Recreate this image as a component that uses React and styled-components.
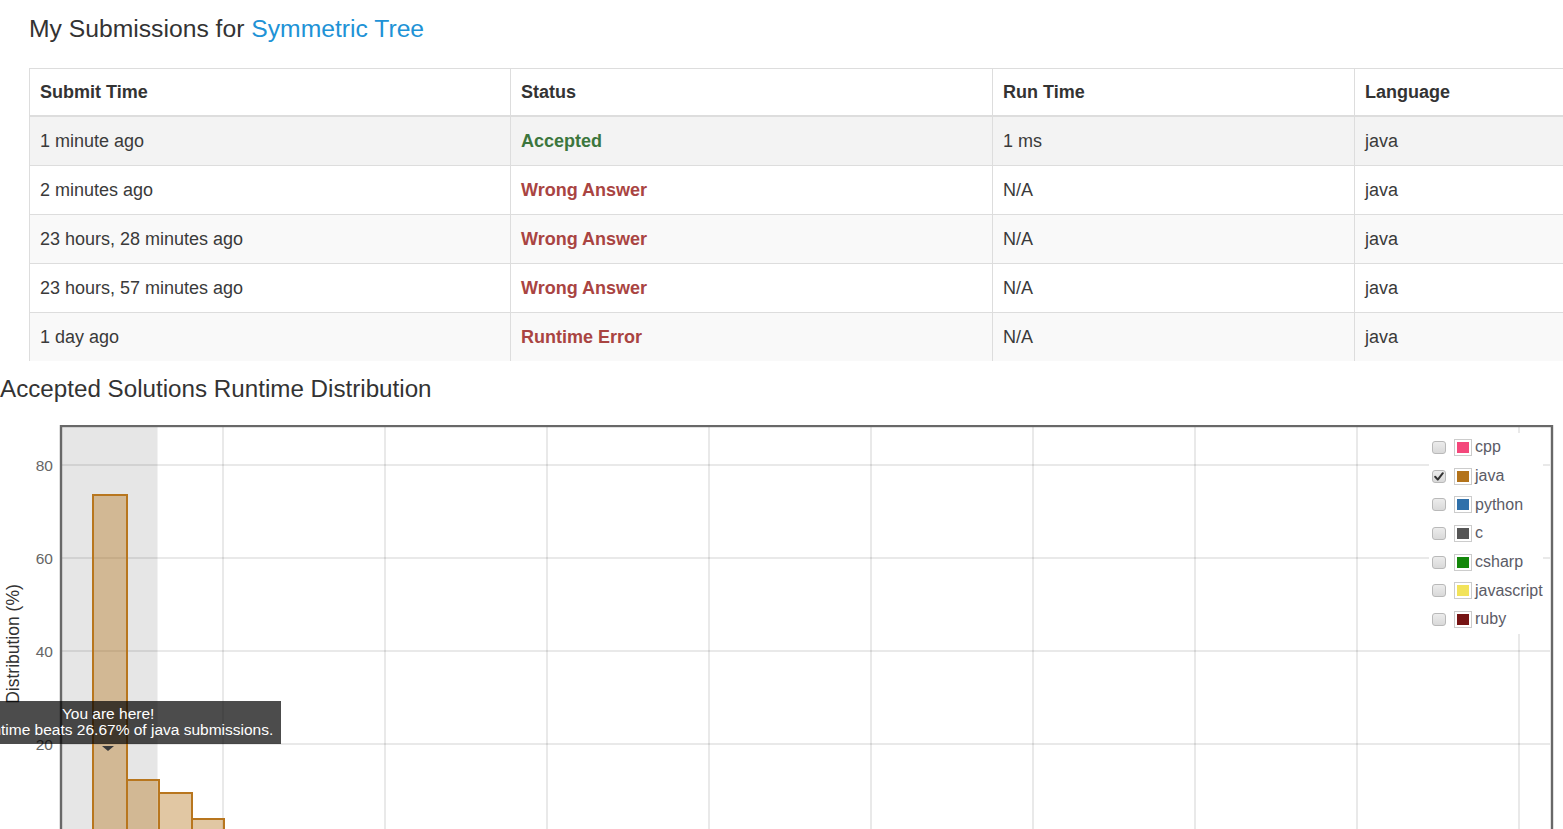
import React from "react";
import styled, { createGlobalStyle } from "styled-components";

const GlobalStyle = createGlobalStyle`
  html, body {
    margin: 0;
    padding: 0;
    background: #fff;
    overflow: hidden;
    font-family: "Liberation Sans", Arial, sans-serif;
    color: #333;
  }
`;

const Page = styled.div`
  width: 1563px;
  height: 829px;
  overflow: hidden;
`;

const Submissions = styled.section`
  padding: 15px 0 0 29px;
`;

const Title = styled.h3`
  margin: 0;
  font-size: 24.7px;
  line-height: 27px;
  font-weight: normal;
  color: #333;
`;

const TitleLink = styled.a`
  color: #2092d6;
  text-decoration: none;
`;

const Table = styled.div`
  margin-top: 26px;
  width: 1800px;
`;

const Row = styled.div`
  display: grid;
  grid-template-columns: 481px 482px 362px 475px;
  box-sizing: border-box;
`;

const HeaderRow = styled(Row)`
  height: 49px;
  border-top: 1px solid #ddd;
  border-bottom: 2px solid #ddd;
  background: #fff;
`;

const BodyRow = styled(Row)`
  height: ${(p) => (p.$first ? 48 : 49)}px;
  border-top: ${(p) => (p.$first ? "none" : "1px solid #ddd")};
  background: ${(p) => p.$bg};
`;

const Cell = styled.div`
  display: flex;
  align-items: center;
  padding: 0 10px;
  border-left: 1px solid #ddd;
  font-size: 18px;
  line-height: 26px;
  white-space: nowrap;
  color: ${(p) => p.$color || "#3a3a3a"};
  font-weight: ${(p) => (p.$bold ? "bold" : "normal")};
`;

const ChartSection = styled.section`
  margin-top: 14px;
`;

const ChartTitle = styled.h3`
  margin: 0;
  font-size: 24.2px;
  line-height: 27px;
  font-weight: normal;
  color: #333;
`;

const ChartArea = styled.div`
  position: relative;
  margin-top: 23px;
  width: 1563px;
  height: 440px;
`;

const ChartSvg = styled.svg`
  display: block;
  font-family: "Liberation Sans", Arial, sans-serif;
`;

const Legend = styled.div`
  position: absolute;
  left: 1429px;
  top: 8px;
  width: 114px;
  background: #fff;
`;

const LegendRow = styled.div`
  display: flex;
  align-items: center;
  height: 28.7px;
  padding-left: 3px;
`;

const CheckBox = styled.span`
  display: flex;
  align-items: center;
  justify-content: center;
  box-sizing: border-box;
  width: 14px;
  height: 13px;
  border: 1px solid #b9b9b9;
  border-radius: 3px;
  background: linear-gradient(#ececec, #d9d9d9);
`;

const Swatch = styled.span`
  box-sizing: border-box;
  width: 18px;
  height: 17px;
  margin-left: 8px;
  border: 1px solid #ccc;
  box-shadow: inset 0 0 0 2px #fff;
  background: ${(p) => p.$color};
`;

const LegendLabel = styled.span`
  margin-left: 3px;
  font-size: 16px;
  line-height: 18px;
  color: #5b5b66;
`;

const Tooltip = styled.div`
  position: absolute;
  left: -65px;
  top: 276px;
  padding: 5px 8px 7px;
  background: rgba(0, 0, 0, 0.7);
  color: #fff;
  font-size: 15.5px;
  line-height: 15.5px;
  text-align: center;
  white-space: nowrap;

  &::after {
    content: "";
    position: absolute;
    left: 50%;
    top: calc(100% + 2px);
    margin-left: -6px;
    border: 6px solid transparent;
    border-bottom: none;
    border-top: 5px solid #3a3a3a;
  }
`;

const submissions = [
  { time: "1 minute ago", status: "Accepted", ok: true, run: "1 ms", lang: "java", bg: "#f3f3f3" },
  { time: "2 minutes ago", status: "Wrong Answer", run: "N/A", lang: "java", bg: "#fff" },
  { time: "23 hours, 28 minutes ago", status: "Wrong Answer", run: "N/A", lang: "java", bg: "#f9f9f9" },
  { time: "23 hours, 57 minutes ago", status: "Wrong Answer", run: "N/A", lang: "java", bg: "#fff" },
  { time: "1 day ago", status: "Runtime Error", run: "N/A", lang: "java", bg: "#f9f9f9" },
];

const languages = [
  { name: "cpp", color: "#f4477b" },
  { name: "java", color: "#b3731a", checked: true },
  { name: "python", color: "#2f70aa" },
  { name: "c", color: "#555555" },
  { name: "csharp", color: "#13870a" },
  { name: "javascript", color: "#f2e35a" },
  { name: "ruby", color: "#761414" },
];

const bars = [
  { x: 93, w: 34, top: 70 },
  { x: 127, w: 32, top: 355 },
  { x: 159, w: 33, top: 368 },
  { x: 192, w: 32, top: 394 },
];

const hLines = [
  { y: 40, label: "80" },
  { y: 133, label: "60" },
  { y: 226, label: "40" },
  { y: 319, label: "20" },
];

const vLines = [223, 385, 547, 709, 871, 1033, 1195, 1357, 1519];

function Chart() {
  const grid = "rgba(0,0,0,0.085)";
  return (
    <ChartSvg width="1563" height="440" viewBox="0 0 1563 440">
      <rect x="62" y="2" width="1488" height="438" fill="#fff" />
      <rect x="62" y="2" width="95.5" height="438" fill="#e6e6e6" />
      {hLines.map((l) => (
        <line key={l.y} x1="62" x2="1550" y1={l.y} y2={l.y} stroke={grid} strokeWidth="2" />
      ))}
      {vLines.map((x) => (
        <line key={x} x1={x} x2={x} y1="2" y2="440" stroke={grid} strokeWidth="2" />
      ))}
      {hLines.map((l) => (
        <text key={l.label} x="53" y={l.y} dy="0.36em" textAnchor="end" fontSize="15.5" fill="#666">
          {l.label}
        </text>
      ))}
      <text
        transform="translate(19 219) rotate(-90)"
        textAnchor="middle"
        fontSize="17.5"
        fill="#333"
      >
        Distribution (%)
      </text>
      {bars.map((b) => (
        <rect
          key={b.x}
          x={b.x}
          y={b.top}
          width={b.w}
          height={440 - b.top + 20}
          fill="rgba(181,115,26,0.4)"
          stroke="#b8761e"
          strokeWidth="2"
        />
      ))}
      <rect x="61" y="1" width="1491" height="460" fill="none" stroke="#686868" strokeWidth="2.4" />
    </ChartSvg>
  );
}

function CheckMark() {
  return (
    <svg width="10" height="9" viewBox="0 0 10 9">
      <path d="M1.2 4.8 L3.8 7.6 L8.8 1.2" fill="none" stroke="#333" strokeWidth="2" strokeLinecap="round" strokeLinejoin="round" />
    </svg>
  );
}

export default function App() {
  return (
    <Page>
      <GlobalStyle />
      <Submissions>
        <Title>
          My Submissions for <TitleLink href="#">Symmetric Tree</TitleLink>
        </Title>
        <Table>
          <HeaderRow>
            <Cell $bold $color="#333">Submit Time</Cell>
            <Cell $bold $color="#333">Status</Cell>
            <Cell $bold $color="#333">Run Time</Cell>
            <Cell $bold $color="#333">Language</Cell>
          </HeaderRow>
          {submissions.map((s, i) => (
            <BodyRow key={i} $first={i === 0} $bg={s.bg}>
              <Cell>{s.time}</Cell>
              <Cell $bold $color={s.ok ? "#3c763d" : "#a94442"}>{s.status}</Cell>
              <Cell>{s.run}</Cell>
              <Cell>{s.lang}</Cell>
            </BodyRow>
          ))}
        </Table>
      </Submissions>
      <ChartSection>
        <ChartTitle>Accepted Solutions Runtime Distribution</ChartTitle>
        <ChartArea>
          <Chart />
          <Legend>
            {languages.map((l) => (
              <LegendRow key={l.name}>
                <CheckBox>{l.checked && <CheckMark />}</CheckBox>
                <Swatch $color={l.color} />
                <LegendLabel>{l.name}</LegendLabel>
              </LegendRow>
            ))}
          </Legend>
          <Tooltip>
            You are here!
            <br />
            Your runtime beats 26.67% of java submissions.
          </Tooltip>
        </ChartArea>
      </ChartSection>
    </Page>
  );
}
